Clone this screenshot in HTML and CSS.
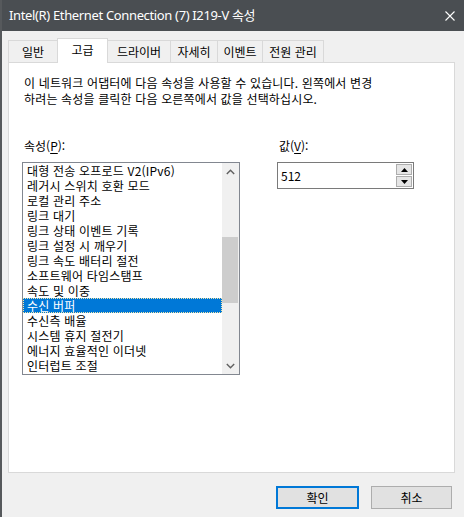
FILE: index.html
```html
<!DOCTYPE html>
<html lang="ko">
<head>
<meta charset="utf-8">
<link rel="stylesheet" href="styles.css">
</head>
<body>
<div class="window">
  <div class="titlebar">
    <span class="title">Intel(R) Ethernet Connection (7) I219-V 속성</span>
    <svg class="close" width="10" height="10" viewBox="0 0 10 10"><path d="M0.5 0.5L9.5 9.5M9.5 0.5L0.5 9.5" stroke="#fff" stroke-width="1.1" fill="none"/></svg>
  </div>
  <div class="content">
    <div class="tabs">
      <div class="tab w1">일반</div>
      <div class="tab sel w2">고급</div>
      <div class="tab w3">드라이버</div>
      <div class="tab w4">자세히</div>
      <div class="tab w5">이벤트</div>
      <div class="tab w6">전원 관리</div>
    </div>
    <div class="panel">
      <p class="desc">이 네트워크 어댑터에 다음 속성을 사용할 수 있습니다. 왼쪽에서 변경<br>하려는 속성을 클릭한 다음 오른쪽에서 값을 선택하십시오.</p>
      <div class="cols">
        <div class="col-prop">
          <div class="label">속성(<u>P</u>):</div>
          <div class="listbox">
            <ul class="items">
              <li>대형 전송 오프로드 V2(IPv6)</li>
              <li>레거시 스위치 호환 모드</li>
              <li>로컬 관리 주소</li>
              <li>링크 대기</li>
              <li>링크 상태 이벤트 기록</li>
              <li>링크 설정 시 깨우기</li>
              <li>링크 속도 배터리 절전</li>
              <li>소프트웨어 타임스탬프</li>
              <li>속도 및 이중</li>
              <li class="selected">수신 버퍼</li>
              <li>수신측 배율</li>
              <li>시스템 휴지 절전기</li>
              <li>에너지 효율적인 이더넷</li>
              <li>인터럽트 조절</li>
            </ul>
            <div class="scrollbar">
              <div class="sbtn"><svg width="9" height="6" viewBox="0 0 9 6"><path d="M0.8 5L4.5 1.3L8.2 5" stroke="#606060" stroke-width="1.4" fill="none"/></svg></div>
              <div class="track"><div class="thumb"></div></div>
              <div class="sbtn"><svg width="9" height="6" viewBox="0 0 9 6"><path d="M0.8 1L4.5 4.7L8.2 1" stroke="#606060" stroke-width="1.4" fill="none"/></svg></div>
            </div>
          </div>
        </div>
        <div class="col-val">
          <div class="label">값(<u>V</u>):</div>
          <div class="spin">
            <span class="spin-value">512</span>
            <div class="spin-btns">
              <div class="sb"><svg width="7" height="4" viewBox="0 0 7 4"><path d="M0 4L3.5 0L7 4Z" fill="#000"/></svg></div>
              <div class="sb"><svg width="7" height="4" viewBox="0 0 7 4"><path d="M0 0L3.5 4L7 0Z" fill="#000"/></svg></div>
            </div>
          </div>
        </div>
      </div>
    </div>
    <div class="buttons">
      <button class="btn default">확인</button>
      <button class="btn cancel">취소</button>
    </div>
  </div>
</div>
</body>
</html>
```

FILE: styles.css
```css
html, body {
  margin: 0;
  padding: 0;
}
body {
  width: 464px;
  height: 517px;
  overflow: hidden;
  background: #f0f0f0;
  font-family: "Noto Sans CJK KR", "Noto Sans", sans-serif;
  font-size: 12px;
  color: #000;
}
.window {
  box-sizing: border-box;
  width: 464px;
  height: 517px;
  border-left: 2px solid #56595c;
  background: #f0f0f0;
}
.titlebar {
  height: 31px;
  background: #4a4e52;
  display: flex;
  align-items: center;
  justify-content: space-between;
  padding: 0 9px 0 7px;
}
.title {
  color: #fff;
  font-family: "Noto Sans", "Noto Sans CJK KR", sans-serif;
  font-size: 13px;
  letter-spacing: -0.35px;
  line-height: 31px;
}
.close {
  display: block;
}
.content {
  padding: 0 9px 0 6px;
}
.tabs {
  height: 31px;
  display: flex;
  align-items: flex-end;
  position: relative;
  z-index: 2;
}
.tab {
  box-sizing: border-box;
  height: 22px;
  border: 1px solid #d9d9d9;
  border-bottom: none;
  margin-right: -1px;
  display: flex;
  align-items: center;
  justify-content: center;
  line-height: 16px;
  background: #f0f0f0;
}
.tab.sel {
  height: 25px;
  margin-bottom: -1px;
  background: #fff;
  position: relative;
  z-index: 3;
  padding-bottom: 3px;
}
.w1 { width: 50px; }
.w2 { width: 51px; }
.w3 { width: 64px; }
.w4 { width: 48px; }
.w5 { width: 46px; }
.w6 { width: 62px; }
.panel {
  box-sizing: border-box;
  height: 411px;
  background: #fff;
  border: 1px solid #d9d9d9;
  padding: 12px 0 0 13px;
}
.desc {
  margin: 0 0 31px 2px;
  line-height: 16px;
  letter-spacing: 0.15px;
}
.cols {
  display: flex;
  gap: 37px;
}
.label {
  line-height: 16px;
  padding-left: 2px;
  margin-bottom: 8px;
}
.label u {
  text-underline-offset: 2px;
}
.listbox {
  box-sizing: border-box;
  width: 218px;
  height: 213px;
  border: 1px solid #828790;
  display: flex;
  background: #fff;
}
.items {
  list-style: none;
  margin: 0;
  padding: 0;
  flex: 1;
}
.items li {
  height: 15px;
  line-height: 15px;
  padding-left: 4px;
  white-space: nowrap;
  letter-spacing: 0.2px;
}
.items li.selected {
  background: #0078d7;
  color: #fff;
  outline: 1px dotted #f3e7a8;
  outline-offset: -1px;
}
.scrollbar {
  width: 17px;
  background: #f0f0f0;
  display: flex;
  flex-direction: column;
}
.sbtn {
  height: 17px;
  display: flex;
  align-items: center;
  justify-content: center;
}
.sbtn svg {
  display: block;
}
.track {
  flex: 1;
}
.thumb {
  margin: 57px 1px 0 0;
  height: 66px;
  background: #cdcdcd;
}
.spin {
  box-sizing: border-box;
  width: 137px;
  height: 27px;
  border: 1px solid #7a7a7a;
  display: flex;
  align-items: center;
  justify-content: space-between;
  padding: 0 1px 0 3px;
  background: #fff;
}
.spin-value {
  line-height: 16px;
}
.spin-btns {
  display: flex;
  flex-direction: column;
  gap: 1px;
  width: 16px;
}
.sb {
  box-sizing: border-box;
  height: 11px;
  border: 1px solid #adadad;
  background: #e5e5e5;
  display: flex;
  align-items: center;
  justify-content: center;
}
.sb svg {
  display: block;
}
.buttons {
  display: flex;
  justify-content: flex-end;
  gap: 12px;
  margin-top: 13px;
  padding-right: 3px;
}
.btn {
  box-sizing: border-box;
  height: 23px;
  font-family: "Noto Sans CJK KR", sans-serif;
  font-size: 12px;
  color: #000;
  background: #e1e1e1;
  border: 1px solid #adadad;
  padding: 0;
  line-height: 16px;
}
.btn.default {
  width: 83px;
  border: 2px solid #0078d7;
}
.btn.cancel {
  width: 81px;
}
```
